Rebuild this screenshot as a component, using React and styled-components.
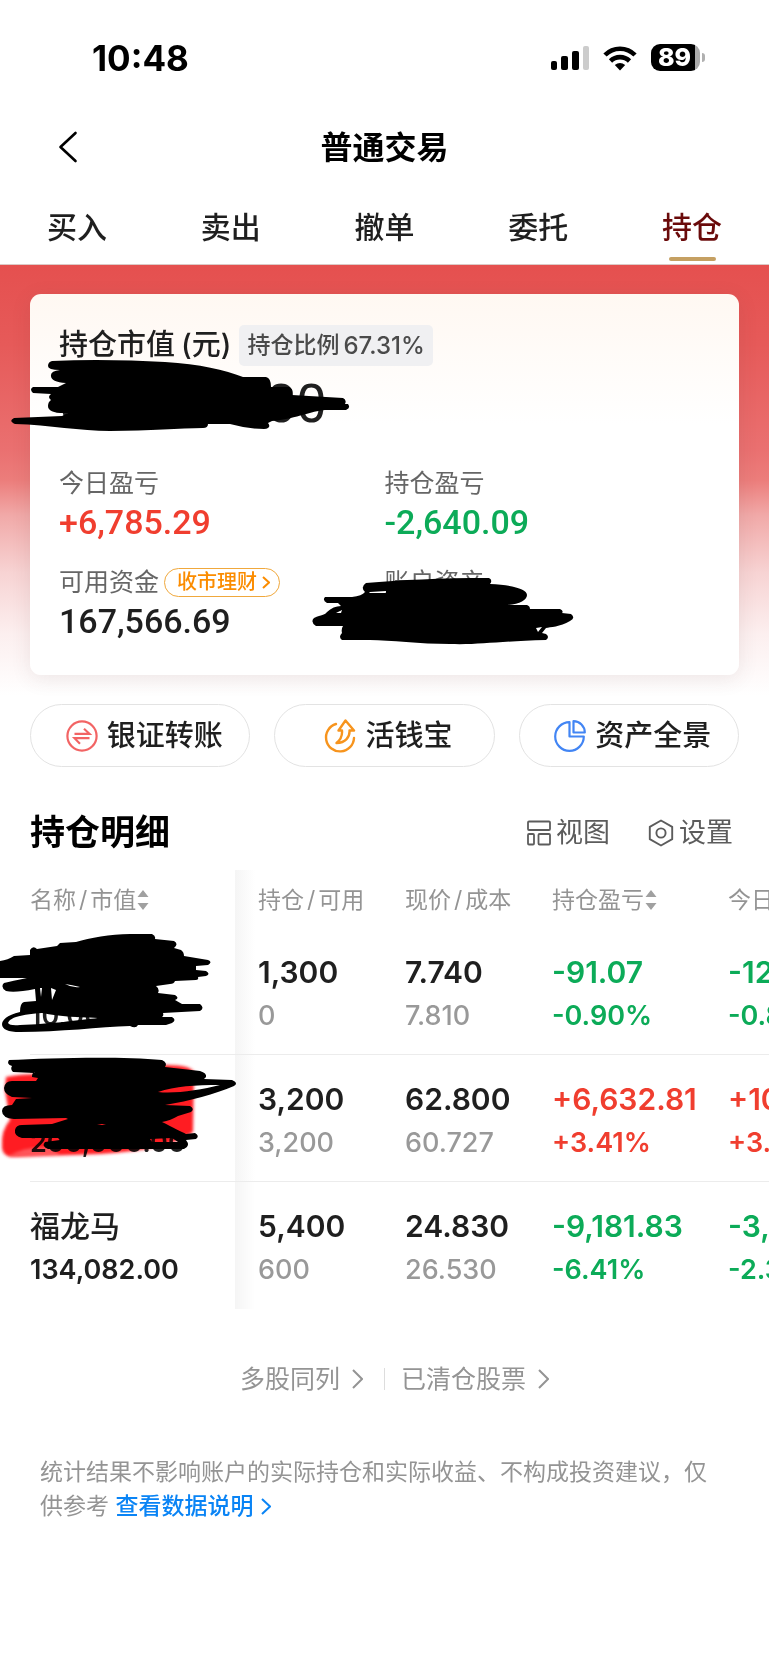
import React from "react";
import styled, { createGlobalStyle } from "styled-components";

const RED = "#f03e2f";
const GREEN = "#0cab58";
const INK = "#1f1f1f";

const Global = createGlobalStyle`
  *, *::before, *::after { box-sizing: border-box; }
  body {
    margin: 0;
    background: #fff;
    color: ${INK};
    font-family: Inter, "Noto Sans CJK SC", "Liberation Sans", sans-serif;
  }
  h1, h2, p, dl, dd { margin: 0; }
  button { border: 0; padding: 0; background: none; font: inherit; color: inherit; cursor: pointer; }
  a { color: inherit; text-decoration: none; }
  svg { display: block; flex: none; }
`;

const Page = styled.div`
  min-height: 100vh;
  overflow-x: hidden;
  padding-bottom: 140px;
`;

const StatusBar = styled.div`
  height: 115px;
  display: flex;
  align-items: center;
  justify-content: space-between;
  padding: 0 64px 0 92px;
`;

const Clock = styled.time`
  font-size: 35px;
  line-height: 40px;
  font-weight: 700;
  color: #000;
`;

const StatusIcons = styled.div`
  display: flex;
  align-items: center;
  gap: 14px;
`;

const NavBar = styled.header`
  height: 64px;
  display: grid;
  grid-template-columns: 1fr auto 1fr;
  align-items: center;
  padding: 0 58px;
`;

const Title = styled.h1`
  padding-top: 2px;
  font-size: 32px;
  line-height: 40px;
  font-weight: 700;
  color: #000;
`;

const Tabs = styled.nav`
  display: grid;
  grid-template-columns: repeat(5, 1fr);
  padding-top: 26px;
  border-bottom: 1px solid #dcc9c6;
`;

const Tab = styled.a`
  display: flex;
  flex-direction: column;
  align-items: center;
  gap: 8px;
  padding-bottom: 3px;
  font-size: 30px;
  line-height: 44px;
  font-weight: 500;
  color: ${(p) => (p.$active ? "#6a0a0a" : INK)};

  &::after {
    content: "";
    width: 47px;
    height: 4px;
    border-radius: 2px;
    background: ${(p) => (p.$active ? "#c5a062" : "transparent")};
  }
`;

const Hero = styled.section`
  padding: 29px 30px;
  background: linear-gradient(#e5504f 0%, #e65a59 18%, #ea7070 42%, #ec7d7b 49%, #f1a9a8 57%, #f7d3d3 70%, #fcefef 84%, #fff 98%);
`;

const Card = styled.div`
  position: relative;
  padding: 30px 29px 35px;
  border-radius: 11px;
  background: linear-gradient(#fff8f2, #fff 130px);
  box-shadow: 0 4px 20px rgba(90, 60, 60, 0.1);
`;

const CardHead = styled.div`
  display: flex;
  align-items: center;
  gap: 8px;
  font-size: 29px;
  line-height: 42px;
  font-weight: 500;
`;

const Unit = styled.span`
  margin-left: 6px;
`;

const Badge = styled.span`
  display: flex;
  gap: 4px;
  padding: 0 8px;
  border-radius: 5px;
  background: #f0f0f2;
  color: #4a4a4a;
  font-size: 23px;
  line-height: 41px;
`;

const Percent = styled.span`
  font-size: 24px;
`;

const Total = styled.p`
  margin-top: 4px;
  font-family: Roboto, sans-serif;
  font-size: 54px;
  line-height: 68px;
  color: ${INK};
`;

const Stats = styled.dl`
  display: grid;
  grid-template-columns: 325fr 325fr;
  row-gap: 21px;
  margin-top: 25px;
`;

const StatLabel = styled.dt`
  display: flex;
  align-items: center;
  gap: 5px;
  font-size: 25px;
  line-height: 40px;
  color: #666;
`;

const StatValue = styled.dd`
  font-family: Roboto, sans-serif;
  font-size: 34px;
  line-height: 38px;
  min-height: 38px;
  font-weight: 500;
  color: ${(p) => p.$color || INK};
`;

const Pill = styled.button`
  display: flex;
  align-items: center;
  gap: 5px;
  height: 29px;
  padding: 0 9px 0 12px;
  border: 1px solid #f0a83c;
  border-radius: 15px;
  font-size: 20px;
  line-height: 26px;
  font-weight: 500;
  color: #fb8c00;
`;

const Actions = styled.div`
  display: grid;
  grid-template-columns: repeat(3, 1fr);
  gap: 24px;
  padding: 0 30px;
`;

const Action = styled.button`
  display: flex;
  align-items: center;
  justify-content: center;
  gap: 9px;
  height: 63px;
  padding-left: 8px;
  border: 1px solid #e3e3e3;
  border-radius: 32px;
  font-size: 29px;
  line-height: 40px;
  font-weight: 500;
`;

const SectionHead = styled.div`
  display: flex;
  align-items: center;
  gap: 38px;
  padding: 43px 36px 15px 30px;
`;

const SectionTitle = styled.h2`
  margin-right: auto;
  font-size: 35px;
  line-height: 45px;
  font-weight: 700;
  color: #000;
`;

const Tool = styled.button`
  display: flex;
  align-items: center;
  gap: 5px;
  font-size: 27px;
  line-height: 40px;
  color: #5c5c5c;
`;

const Holdings = styled.div`
  position: relative;
`;

const Scroller = styled.div`
  margin-left: 30px;
  overflow: hidden;
`;

const Table = styled.table`
  table-layout: fixed;
  width: 900px;
  border-collapse: separate;
  border-spacing: 0;
`;

const Col = styled.col`
  width: ${(p) => p.$w}px;
`;

const Th = styled.th`
  height: 58px;
  padding: 2px 0 0;
  text-align: left;
  font-size: 23px;
  line-height: 34px;
  font-weight: 400;
  color: #949494;
  white-space: nowrap;

  &:nth-child(2) {
    padding-left: 23px;
    background: linear-gradient(90deg, #f5f5f5, #fff 20px);
  }
`;

const HeadLabel = styled.span`
  display: flex;
  align-items: center;
  gap: 1px;
`;

const Slash = styled.span`
  margin: 0 3px;
`;

const Td = styled.td`
  padding: 22px 0 16px;
  text-align: left;
  font-weight: 600;
  white-space: nowrap;
  color: ${(p) => p.$color || INK};
  border-bottom: 1px solid #ececec;

  tr:last-child > & {
    border-bottom-color: transparent;
  }
  &:nth-child(2) {
    padding-left: 23px;
    background: linear-gradient(90deg, #f5f5f5, #fff 20px);
  }
`;

const Main = styled.div`
  height: 44px;
  font-size: 30px;
  line-height: 44px;
`;

const Name = styled(Main)`
  font-weight: 500;
`;

const Sub = styled.div`
  height: 44px;
  font-size: 27px;
  line-height: 44px;
  font-weight: ${(p) => (p.$muted ? 500 : "inherit")};
  color: ${(p) => (p.$muted ? "#999" : "inherit")};
`;

const Overlay = styled.svg`
  position: absolute;
  left: ${(p) => p.$x}px;
  top: ${(p) => p.$y}px;
  pointer-events: none;
  mix-blend-mode: ${(p) => (p.$marker ? "multiply" : "normal")};
`;

const MoreLinks = styled.nav`
  display: flex;
  align-items: center;
  justify-content: center;
  padding: 50px 0 0 20px;
  font-size: 25px;
  line-height: 40px;
  color: #949494;
`;

const MoreLink = styled.a`
  display: flex;
  align-items: center;
  gap: 12px;

  & + & {
    margin-left: 21px;
    padding-left: 17px;
    background: linear-gradient(#ddd, #ddd) 0 50% / 1px 22px no-repeat;
  }
`;

const Note = styled.p`
  padding: 56px 42px 0 40px;
  font-size: 23px;
  line-height: 34px;
  color: #949494;
`;

const NoteLink = styled.a`
  font-weight: 500;
  color: #0a84f5;

  svg {
    display: inline-block;
    margin-left: 8px;
    vertical-align: -1px;
  }
`;

const Chevron = ({ w, h, stroke = 2 }) => (
  <svg width={w} height={h} viewBox={`0 0 ${w} ${h}`} fill="none" stroke="currentColor" strokeWidth={stroke} aria-hidden="true">
    <path d={`M1 1 L${w - 1} ${h / 2} L1 ${h - 1}`} />
  </svg>
);

const Signal = () => (
  <svg width="38" height="26" viewBox="0 0 38 26" aria-hidden="true">
    <rect x="0" y="16" width="6" height="9" rx="2" />
    <rect x="10" y="11" width="7" height="14" rx="2" />
    <rect x="21" y="6" width="7" height="19" rx="2" />
    <rect x="32" y="1" width="6" height="24" rx="2" fill="#ccc" />
  </svg>
);

const Wifi = () => (
  <svg width="34" height="26" viewBox="0 0 34 26" fill="none" stroke="#000" strokeWidth="4.6" aria-hidden="true">
    <path d="M2 10 A21 21 0 0 1 32 10" />
    <path d="M7.5 16 A13.5 13.5 0 0 1 26.500 16" />
    <path d="M17 25.500 L11.800 20 Q17 15.800 22.200 20 Z" fill="#000" stroke="none" />
  </svg>
);

const BatteryBox = styled.div`
  display: flex;
  align-items: center;
  gap: 2px;

  &::after {
    content: "";
    width: 3px;
    height: 9px;
    border-radius: 0 4px 4px 0;
    background: #b0b0b0;
  }
`;

const BatteryBody = styled.span`
  width: 49px;
  height: 27px;
  padding-right: 2px;
  border-radius: 9px;
  background: linear-gradient(90deg, #000 44px, #aaa 44px);
  color: #fff;
  font-size: 25px;
  line-height: 27px;
  font-weight: 800;
  text-align: center;
`;

const BackIcon = () => (
  <svg width="20" height="32" viewBox="0 0 20 32" fill="none" stroke="#000" strokeWidth="2.6" strokeLinecap="round" strokeLinejoin="round" aria-hidden="true">
    <path d="M17.500 2 L2.500 16 L17.500 30" />
  </svg>
);

const TransferIcon = () => (
  <svg width="32" height="32" viewBox="0 0 32 32" fill="none" stroke="#f26464" strokeWidth="2.200" aria-hidden="true">
    <circle cx="16" cy="16" r="14.600" />
    <path d="M8.500 13.800 H23.500 L18 8.800 M23.500 18.200 H8.500 L14 23.800" />
  </svg>
);

const CashIcon = () => (
  <svg width="32" height="34" viewBox="0 0 32 34" fill="none" stroke="#f7941d" strokeWidth="2.400" strokeLinecap="round" strokeLinejoin="round" aria-hidden="true">
    <path d="M12 5 A14 14 0 1 0 30 19" />
    <path d="M21.500 1.500 L30 11.500 H25.500 C26 18 21.500 24 12.500 24 C17 20.500 18.500 17 18 11.500 H14.500 Z" />
  </svg>
);

const PieIcon = () => (
  <svg width="32" height="32" viewBox="0 0 32 32" fill="none" stroke="#4285f4" strokeWidth="2.200" strokeLinejoin="round" aria-hidden="true">
    <path d="M15.500 2.200 A14.300 14.300 0 1 0 29.800 16.500 H15.500 Z" />
    <path d="M19.500 1.200 V12.500 H30.800 A11.300 11.300 0 0 0 19.500 1.200 Z" />
  </svg>
);

const LayoutIcon = () => (
  <svg width="24" height="26" viewBox="0 0 24 26" fill="none" stroke="currentColor" strokeWidth="1.800" aria-hidden="true">
    <rect x="1" y="1.500" width="22" height="8.500" rx="1" />
    <rect x="1" y="14" width="6" height="10.500" rx="1" />
    <rect x="11.500" y="14" width="11.500" height="10.500" rx="1" />
  </svg>
);

const HexIcon = () => (
  <svg width="26" height="28" viewBox="0 0 26 28" fill="none" stroke="currentColor" strokeWidth="1.900" strokeLinejoin="round" aria-hidden="true">
    <path d="M13 1.500 L24.200 7.800 V20.200 L13 26.500 L1.800 20.200 V7.800 Z" />
    <circle cx="13" cy="14" r="4.600" />
  </svg>
);

const SortIcon = () => (
  <svg width="12" height="22" viewBox="0 0 12 22" fill="#a0a0a0" aria-hidden="true">
    <path d="M6 1 L11.500 8 H0.500 Z M0.500 14 H11.500 L6 21 Z" />
  </svg>
);

const TotalScribble = () => (
  <Overlay $x={-20} $y={64} width="342" height="76" viewBox="10 358 342 76" aria-hidden="true">
    <path d="M52 361 C90 359 130 360 165 362 C200 364 225 370 243 377 L266 377 Q271 378 271 387 L289 387 Q294 389 292 395 L343 398 Q347 400 345 404 L348 404 Q351 408 346 410 L325 410 C310 411 300 418 272 421 L268 423 Q272 428 264 429 Q248 429 230 424 L208 424 Q208 428 203 428 C180 428 150 431 110 431 C80 431 50 425 15 424 Q8 421 14 418 L62 416 L68 413 Q48 414 48 406 Q48 402 51 400 Q47 397 51 394 L33 393 Q29 389 33 387 L58 387 L66 383 Q50 382 51 375 Q51 371 60 370 Q48 370 48 366 Q48 362 52 361 Z" />
  </Overlay>
);

const AssetScribble = () => (
  <Overlay $x={281} $y={282} width="266" height="72" viewBox="311 576 266 72" aria-hidden="true">
    <path fillRule="evenodd" d="M366 583 C400 580 440 578 489 578 Q493 580 490 584 C512 585 527 589 527 595 C527 600 520 604 508 605 L527 605 Q530 606 530 609 L560 609 Q564 611 562 613 L571 614 Q576 618 570 621 C560 627 550 627 546 628 L542 633 L546 634 Q550 637 546 640 C500 641 480 645 450 644 C420 644 390 640 370 640 L342 640 Q338 637 342 633 Q341 629 343 626 L316 626 Q310 622 314 618 C322 614 324 616 327 612 C331 608 336 606 341 606 L338 603 L327 603 Q322 600 325 597 L352 597 Q362 596 365 592 Q360 587 366 583 Z M370 592 L386 591 L386 593 L369 593 Z M336 613 L342 610 L341 613 Z M536 628 L542 627 L538 632 Z" />
  </Overlay>
);

const RowOneScribble = () => (
  <Overlay $x={0} $y={60} width="216" height="106" viewBox="0 930 216 106" aria-hidden="true">
    <path fillRule="evenodd" d="M0 961 Q8 960 14 956 L30 955 L30 950 Q33 945 37 949 L57 946 L60 943 L76 942 C90 938 110 934 130 934 L152 934 Q156 936 155 939 L174 941 Q179 944 174 948 L181 950 Q184 952 184 956 L208 960 Q213 962 208 965 L196 966 L196 970 L206 971 Q211 974 206 976 L198 977 Q199 980 196 980 L175 981 Q174 984 170 984 L156 986 Q160 989 158 993 L175 995 Q180 998 175 1000 L182 1004 L200 1004 Q205 1008 200 1011 L163 1013 Q164 1016 162 1017 L172 1017 Q177 1020 172 1023 L166 1025 L138 1025 Q136 1029 130 1026 C100 1027 60 1032 20 1032 Q2 1032 2 1024 Q3 1016 20 1012 Q20 1003 24 1002 L36 1001 L35 989 Q15 993 6 991 Q0 987 4 983 Q12 981 27 978 L0 978 Z M8 1023 C10 1017 24 1014 42 1013 C60 1017 80 1017 98 1018 C80 1020 50 1024 20 1025 Q10 1026 8 1023 Z M40 988 L42 988 L41 997 Z M51 988 L56 990 L52 1000 Z M65 984 Q72 988 80 987 Q72 985 65 984 Z" />
  </Overlay>
);

const RowTwoMarker = () => (
  <Overlay $marker $x={0} $y={188} width="204" height="106" viewBox="0 1058 204 106" aria-hidden="true">
    <defs>
      <filter id="soft"><feGaussianBlur stdDeviation="1.500" /></filter>
    </defs>
    <path filter="url(#soft)" fill="#ff1b20" d="M6 1077 Q20 1074 40 1074 L160 1065 Q190 1064 194 1072 L193 1132 Q170 1150 100 1154 L16 1157 Q2 1158 2 1146 Q1 1130 10 1120 L5 1090 Z" />
    <path filter="url(#soft)" fill="#fff" opacity="0.250" d="M8 1156 Q26 1146 50 1147 L60 1155 Z" />
  </Overlay>
);

const RowTwoScribble = () => (
  <Overlay $x={0} $y={186} width="240" height="98" viewBox="0 1056 240 98" aria-hidden="true">
    <path fillRule="evenodd" d="M9 1060 C50 1058 120 1056 162 1060 Q168 1063 165 1067 L200 1071 Q207 1073 206 1077 L204 1079 L232 1080 Q239 1083 234 1086 C215 1094 190 1101 165 1105 L190 1106 Q195 1109 191 1112 L178 1116 C173 1119 168 1121 162 1122 C172 1127 182 1132 186 1134 L195 1133 Q200 1136 196 1139 L186 1140 Q191 1146 184 1149 L48 1149 Q41 1146 45 1142 L60 1140 L58 1138 L22 1138 Q14 1136 15 1130 Q16 1125 22 1125 L52 1124 L68 1119 L66 1118 L14 1119 Q2 1118 2 1111 Q2 1105 12 1105 L16 1099 L32 1098 L12 1097 Q4 1094 4 1088 Q5 1081 12 1081 L36 1081 L38 1078 L32 1077 Q32 1072 35 1073 L13 1072 Q10 1069 12 1066 Q6 1064 9 1060 Z M158 1092 C175 1086 195 1085 220 1085 C200 1090 175 1094 158 1092 Z M97 1124 L106 1124 L102 1125 Z M150 1139 L172 1138 L178 1142 L152 1142 Z" />
  </Overlay>
);

const tabs = ["买入", "卖出", "撤单", "委托", "持仓"];

const actions = [
  { label: "银证转账", Icon: TransferIcon },
  { label: "活钱宝", Icon: CashIcon },
  { label: "资产全景", Icon: PieIcon },
];

const rows = [
  { name: "", value: "10,000.00", held: "1,300", usable: "0", price: "7.740", cost: "7.810", gain: "-91.07", rate: "-0.90%", day: "-12.00", dayRate: "-0.80%" },
  { name: "", value: "200,000.00", held: "3,200", usable: "3,200", price: "62.800", cost: "60.727", gain: "+6,632.81", rate: "+3.41%", day: "+10,000", dayRate: "+3.00%" },
  { name: "福龙马", value: "134,082.00", held: "5,400", usable: "600", price: "24.830", cost: "26.530", gain: "-9,181.83", rate: "-6.41%", day: "-3,000", dayRate: "-2.30%" },
];

const toneOf = (text) => (text.startsWith("+") ? RED : GREEN);

const HoldingRow = ({ row }) => (
  <tr>
    <Td>
      <Name>{row.name}</Name>
      <Sub>{row.value}</Sub>
    </Td>
    <Td>
      <Main>{row.held}</Main>
      <Sub $muted>{row.usable}</Sub>
    </Td>
    <Td>
      <Main>{row.price}</Main>
      <Sub $muted>{row.cost}</Sub>
    </Td>
    <Td $color={toneOf(row.gain)}>
      <Main>{row.gain}</Main>
      <Sub>{row.rate}</Sub>
    </Td>
    <Td $color={toneOf(row.day)}>
      <Main>{row.day}</Main>
      <Sub>{row.dayRate}</Sub>
    </Td>
  </tr>
);

export default function App() {
  return (
    <Page>
      <Global />
      <StatusBar>
        <Clock>10:48</Clock>
        <StatusIcons>
          <Signal />
          <Wifi />
          <BatteryBox>
            <BatteryBody>89</BatteryBody>
          </BatteryBox>
        </StatusIcons>
      </StatusBar>

      <NavBar>
        <button type="button" aria-label="返回">
          <BackIcon />
        </button>
        <Title>普通交易</Title>
      </NavBar>

      <Tabs>
        {tabs.map((tab) => (
          <Tab key={tab} href="#" $active={tab === "持仓"}>
            {tab}
          </Tab>
        ))}
      </Tabs>

      <Hero>
        <Card>
          <CardHead>
            <span>
              持仓市值<Unit>(元)</Unit>
            </span>
            <Badge>
              持仓比例<Percent>67.31%</Percent>
            </Badge>
          </CardHead>
          <Total>000,000.00</Total>
          <Stats>
            <div>
              <StatLabel>今日盈亏</StatLabel>
              <StatValue $color={RED}>+6,785.29</StatValue>
            </div>
            <div>
              <StatLabel>持仓盈亏</StatLabel>
              <StatValue $color={GREEN}>-2,640.09</StatValue>
            </div>
            <div>
              <StatLabel>
                可用资金
                <Pill type="button">
                  收市理财
                  <Chevron w={8} h={13} />
                </Pill>
              </StatLabel>
              <StatValue>167,566.69</StatValue>
            </div>
            <div>
              <StatLabel>账户资产</StatLabel>
              <StatValue />
            </div>
          </Stats>
          <TotalScribble />
          <AssetScribble />
        </Card>
      </Hero>

      <Actions>
        {actions.map(({ label, Icon }) => (
          <Action key={label} type="button">
            <Icon />
            {label}
          </Action>
        ))}
      </Actions>

      <SectionHead>
        <SectionTitle>持仓明细</SectionTitle>
        <Tool type="button">
          <LayoutIcon />
          视图
        </Tool>
        <Tool type="button">
          <HexIcon />
          设置
        </Tool>
      </SectionHead>

      <Holdings>
        <Scroller>
          <Table>
            <colgroup>
              <Col $w={205} />
              <Col $w={170} />
              <Col $w={147} />
              <Col $w={176} />
              <Col $w={202} />
            </colgroup>
            <thead>
              <tr>
                <Th scope="col">
                  <HeadLabel>
                    <span>名称<Slash>/</Slash>市值</span>
                    <SortIcon />
                  </HeadLabel>
                </Th>
                <Th scope="col">持仓<Slash>/</Slash>可用</Th>
                <Th scope="col">现价<Slash>/</Slash>成本</Th>
                <Th scope="col">
                  <HeadLabel>
                    持仓盈亏
                    <SortIcon />
                  </HeadLabel>
                </Th>
                <Th scope="col">今日盈亏</Th>
              </tr>
            </thead>
            <tbody>
              {rows.map((row) => (
                <HoldingRow key={row.value} row={row} />
              ))}
            </tbody>
          </Table>
        </Scroller>
        <RowOneScribble />
        <RowTwoMarker />
        <RowTwoScribble />
      </Holdings>

      <MoreLinks>
        <MoreLink href="#">
          多股同列
          <Chevron w={11} h={20} />
        </MoreLink>
        <MoreLink href="#">
          已清仓股票
          <Chevron w={11} h={20} />
        </MoreLink>
      </MoreLinks>

      <Note>
        统计结果不影响账户的实际持仓和实际收益、不构成投资建议，仅供参考{" "}
        <NoteLink href="#">
          查看数据说明
          <Chevron w={10} h={17} />
        </NoteLink>
      </Note>
    </Page>
  );
}
